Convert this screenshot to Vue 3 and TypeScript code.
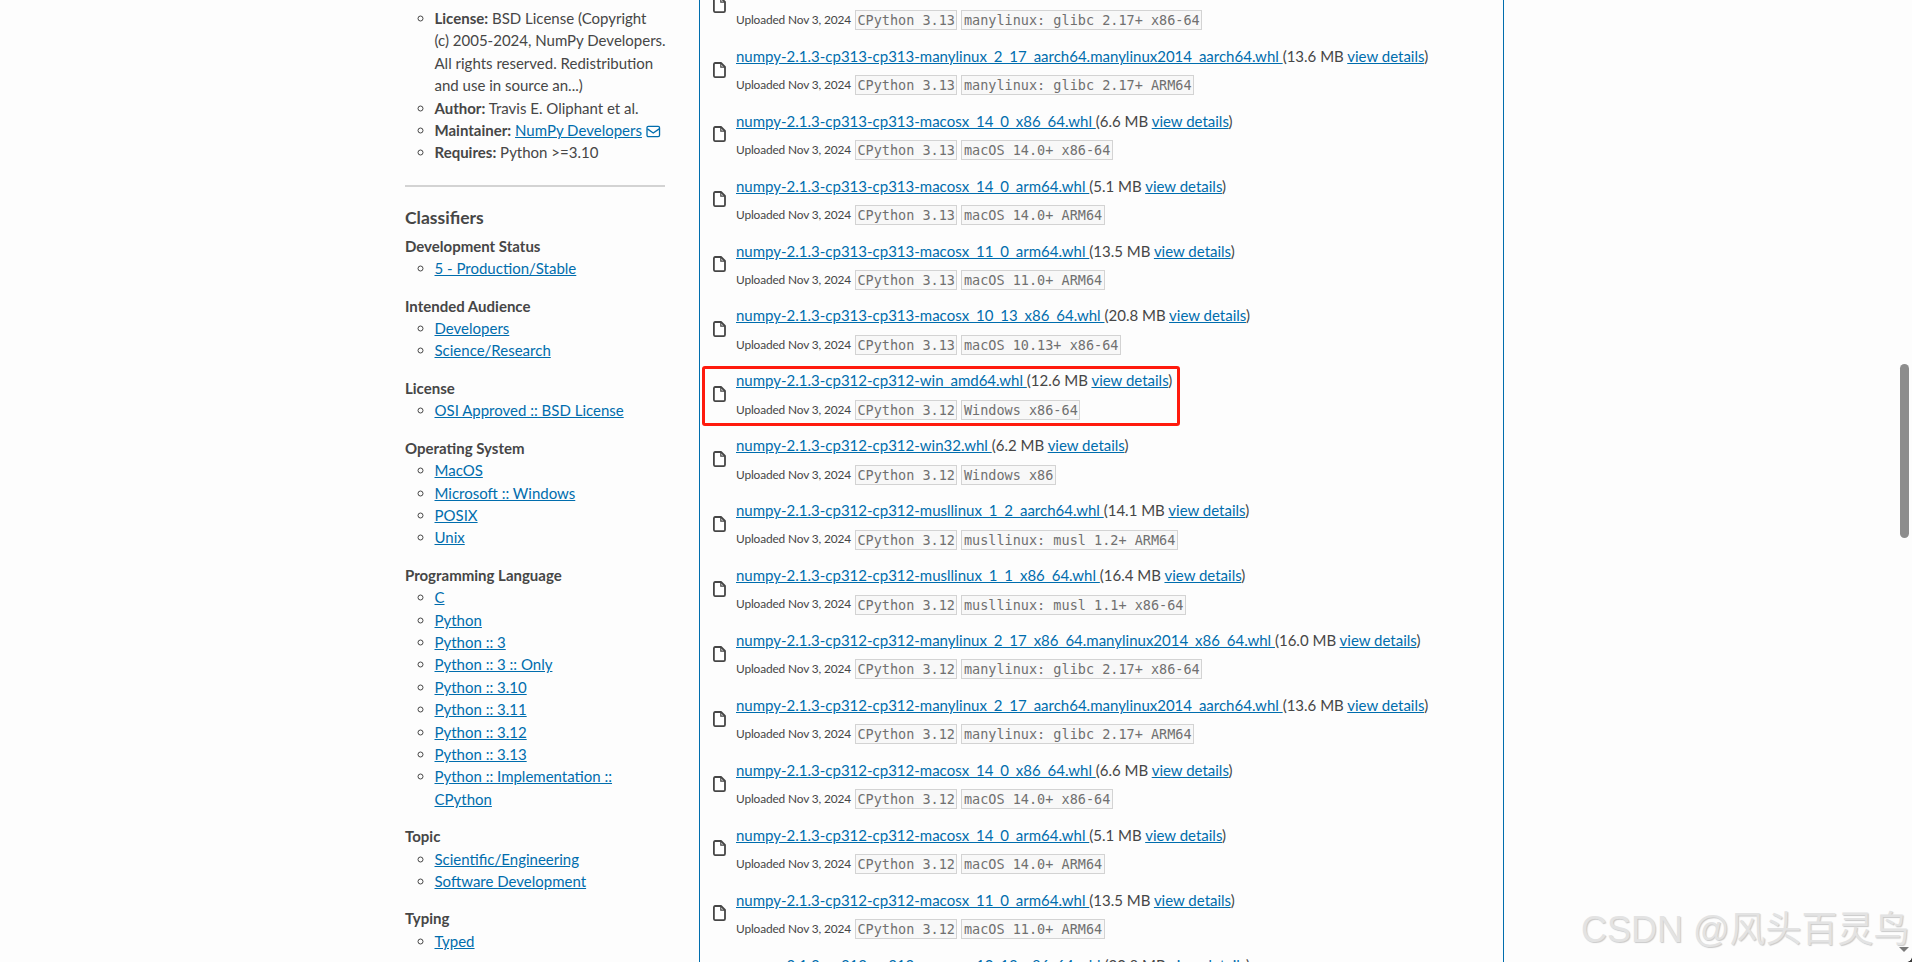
<script setup lang="ts">
interface Row { name: string; size: string; py: string; tag: string; mark?: boolean }

const p = 'numpy-2.1.3-'
const rows: Row[] = [
  { name: 'cp313-cp313-manylinux_2_17_x86_64.manylinux2014_x86_64.whl', size: '16.0 MB', py: '3.13', tag: 'manylinux: glibc 2.17+ x86-64' },
  { name: 'cp313-cp313-manylinux_2_17_aarch64.manylinux2014_aarch64.whl', size: '13.6 MB', py: '3.13', tag: 'manylinux: glibc 2.17+ ARM64' },
  { name: 'cp313-cp313-macosx_14_0_x86_64.whl', size: '6.6 MB', py: '3.13', tag: 'macOS 14.0+ x86-64' },
  { name: 'cp313-cp313-macosx_14_0_arm64.whl', size: '5.1 MB', py: '3.13', tag: 'macOS 14.0+ ARM64' },
  { name: 'cp313-cp313-macosx_11_0_arm64.whl', size: '13.5 MB', py: '3.13', tag: 'macOS 11.0+ ARM64' },
  { name: 'cp313-cp313-macosx_10_13_x86_64.whl', size: '20.8 MB', py: '3.13', tag: 'macOS 10.13+ x86-64' },
  { name: 'cp312-cp312-win_amd64.whl', size: '12.6 MB', py: '3.12', tag: 'Windows x86-64', mark: true },
  { name: 'cp312-cp312-win32.whl', size: '6.2 MB', py: '3.12', tag: 'Windows x86' },
  { name: 'cp312-cp312-musllinux_1_2_aarch64.whl', size: '14.1 MB', py: '3.12', tag: 'musllinux: musl 1.2+ ARM64' },
  { name: 'cp312-cp312-musllinux_1_1_x86_64.whl', size: '16.4 MB', py: '3.12', tag: 'musllinux: musl 1.1+ x86-64' },
  { name: 'cp312-cp312-manylinux_2_17_x86_64.manylinux2014_x86_64.whl', size: '16.0 MB', py: '3.12', tag: 'manylinux: glibc 2.17+ x86-64' },
  { name: 'cp312-cp312-manylinux_2_17_aarch64.manylinux2014_aarch64.whl', size: '13.6 MB', py: '3.12', tag: 'manylinux: glibc 2.17+ ARM64' },
  { name: 'cp312-cp312-macosx_14_0_x86_64.whl', size: '6.6 MB', py: '3.12', tag: 'macOS 14.0+ x86-64' },
  { name: 'cp312-cp312-macosx_14_0_arm64.whl', size: '5.1 MB', py: '3.12', tag: 'macOS 14.0+ ARM64' },
  { name: 'cp312-cp312-macosx_11_0_arm64.whl', size: '13.5 MB', py: '3.12', tag: 'macOS 11.0+ ARM64' },
  { name: 'cp312-cp312-macosx_10_13_x86_64.whl', size: '20.8 MB', py: '3.12', tag: 'macOS 10.13+ x86-64' },
]

const groups: { title: string; items: string[] }[] = [
  { title: 'Development Status', items: ['5 - Production/Stable'] },
  { title: 'Intended Audience', items: ['Developers', 'Science/Research'] },
  { title: 'License', items: ['OSI Approved :: BSD License'] },
  { title: 'Operating System', items: ['MacOS', 'Microsoft :: Windows', 'POSIX', 'Unix'] },
  { title: 'Programming Language', items: ['C', 'Python', 'Python :: 3', 'Python :: 3 :: Only', 'Python :: 3.10', 'Python :: 3.11', 'Python :: 3.12', 'Python :: 3.13', 'Python :: Implementation :: CPython'] },
  { title: 'Topic', items: ['Scientific/Engineering', 'Software Development'] },
  { title: 'Typing', items: ['Typed'] },
]
</script>

<template>
  <div class="page">
    <aside class="side">
      <ul class="meta">
        <li class="nw"><b>License:</b> BSD License (Copyright<br />(c) 2005-2024, NumPy Developers.<br />All rights reserved. Redistribution<br />and use in source an...)</li>
        <li><b>Author:</b> Travis E. Oliphant et al.</li>
        <li class="nw">
          <b>Maintainer:</b> <a href="#">NumPy Developers</a>
          <svg class="mail" viewBox="0 0 16 14" width="15" height="13" aria-hidden="true">
            <rect x="1" y="1.500" width="13.500" height="11" rx="1.500" fill="none" stroke="#006dad" stroke-width="1.400" />
            <path d="M1.400 4.200 7.750 8.600 14.100 4.200" fill="none" stroke="#006dad" stroke-width="1.400" />
          </svg>
        </li>
        <li><b>Requires:</b> Python &gt;=3.10</li>
      </ul>
      <hr class="rule" />
      <h3 class="clf">Classifiers</h3>
      <section v-for="g in groups" :key="g.title" class="grp">
        <strong>{{ g.title }}</strong>
        <ul>
          <li v-for="i in g.items" :key="i"><a href="#">{{ i }}</a></li>
        </ul>
      </section>
    </aside>

    <main class="files">
      <div class="list">
        <div v-for="r in rows" :key="r.name" class="row">
          <svg class="doc" viewBox="0 0 13 16" width="13" height="16" aria-hidden="true">
            <path d="M2 1h6l4 4v8.800a1.300 1.300 0 0 1-1.300 1.300H2A1.300 1.300 0 0 1 .9 13.800V2.200A1.300 1.300 0 0 1 2 1Z" fill="#fff" stroke="#464646" stroke-width="1.800" stroke-linejoin="round" />
            <path d="M7.800 1.300v3.900h3.900" fill="none" stroke="#464646" stroke-width="1.200" />
          </svg>
          <div class="body">
            <div class="title"><a href="#">{{ p + r.name + ' ' }}</a>({{ r.size }} <a href="#">view details</a>)</div>
            <div class="sub">
              <span class="up">Uploaded Nov 3, 2024</span>
              <code>CPython {{ r.py }}</code>
              <code>{{ r.tag }}</code>
            </div>
          </div>
          <div v-if="r.mark" class="mark"></div>
        </div>
      </div>
    </main>

    <div class="thumb"></div>
    <div class="arrow"></div>
    <div class="corner"></div>
    <div class="wm">CSDN @风头百灵鸟</div>
  </div>
</template>

<style>
html, body { margin: 0; background: #fdfdfd; overflow: hidden; }
</style>

<style scoped>
.page {
  position: relative;
  display: flex;
  width: 1912px;
  height: 962px;
  overflow: hidden;
  background: #fdfdfd;
  color: #464646;
  font-family: "Lato", "Noto Sans", sans-serif;
  font-size: 15px;
  line-height: 22.400px;
}
a { color: #006dad; text-decoration: underline; }
b, strong, h3 { color: #464646; font-weight: 700; }

.side {
  width: 260px;
  margin-left: 405px;
  margin-right: 34px;
  flex: none;
  padding-top: 7px;
}
ul { margin: 0; padding: 0 0 0 29.500px; list-style: circle; }
.nw { white-space: nowrap; }
.mail { vertical-align: -2px; margin-left: 4px; }
.rule { border: 0; height: 2px; background: #d3d3d3; margin: 21px 0 19px; }
.clf { margin: 0 0 5px; font-size: 17.500px; line-height: 24px; }
.grp { margin-bottom: 15px; }
.grp strong { display: block; }

.files {
  width: 805px;
  flex: none;
  box-sizing: border-box;
  border-left: 1px solid #006dad;
  border-right: 1px solid #006dad;
  height: 962px;
  overflow: hidden;
}
.list { margin-top: -27.300px; padding-left: 11px; }
.row {
  position: relative;
  display: flex;
  align-items: center;
  gap: 10px;
  height: 64.920px;
  padding-left: 2px;
  box-sizing: border-box;
}
.doc { flex: none; margin-top: -1px; }
.title { white-space: pre; line-height: 22.400px; }
.sub { display: flex; align-items: center; gap: 4px; margin-top: 8px; height: 20px; white-space: nowrap; }
.up { font-size: 11.900px; letter-spacing: -0.150px; }
code {
  box-sizing: border-box;
  height: 20px;
  padding: 0 1.500px;
  border: 1px solid #d3d3d3;
  background: #f8f8f8;
  color: #707070;
  font-family: "DejaVu Sans Mono", "Liberation Mono", monospace;
  font-size: 13.500px;
  line-height: 18px;
}
.mark {
  position: absolute;
  left: -9px;
  top: 3.800px;
  width: 478px;
  height: 60px;
  box-sizing: border-box;
  border: 3px solid #ff1a0d;
  border-radius: 3px;
}
.thumb {
  position: absolute;
  left: 1900px;
  top: 364px;
  width: 9px;
  height: 174px;
  border-radius: 5px;
  background: #8d8d8d;
}
.arrow {
  position: absolute;
  left: 1899px;
  top: 947px;
  width: 0;
  height: 0;
  border-left: 5px solid transparent;
  border-right: 5px solid transparent;
  border-top: 5px solid #7a7a7a;
}
.corner {
  position: absolute;
  right: 0;
  bottom: 0;
  width: 5px;
  height: 5px;
  background: radial-gradient(circle at 0 0, transparent 4.500px, #3a3a3a 5px);
}
.wm {
  position: absolute;
  left: 1581px;
  top: 908px;
  font-family: "Liberation Sans", "Noto Sans CJK SC", sans-serif;
  font-size: 36px;
  line-height: 44px;
  color: #e3e3e3;
  text-shadow: 1px 1px 1px #c9c9c9;
  white-space: nowrap;
}
</style>
